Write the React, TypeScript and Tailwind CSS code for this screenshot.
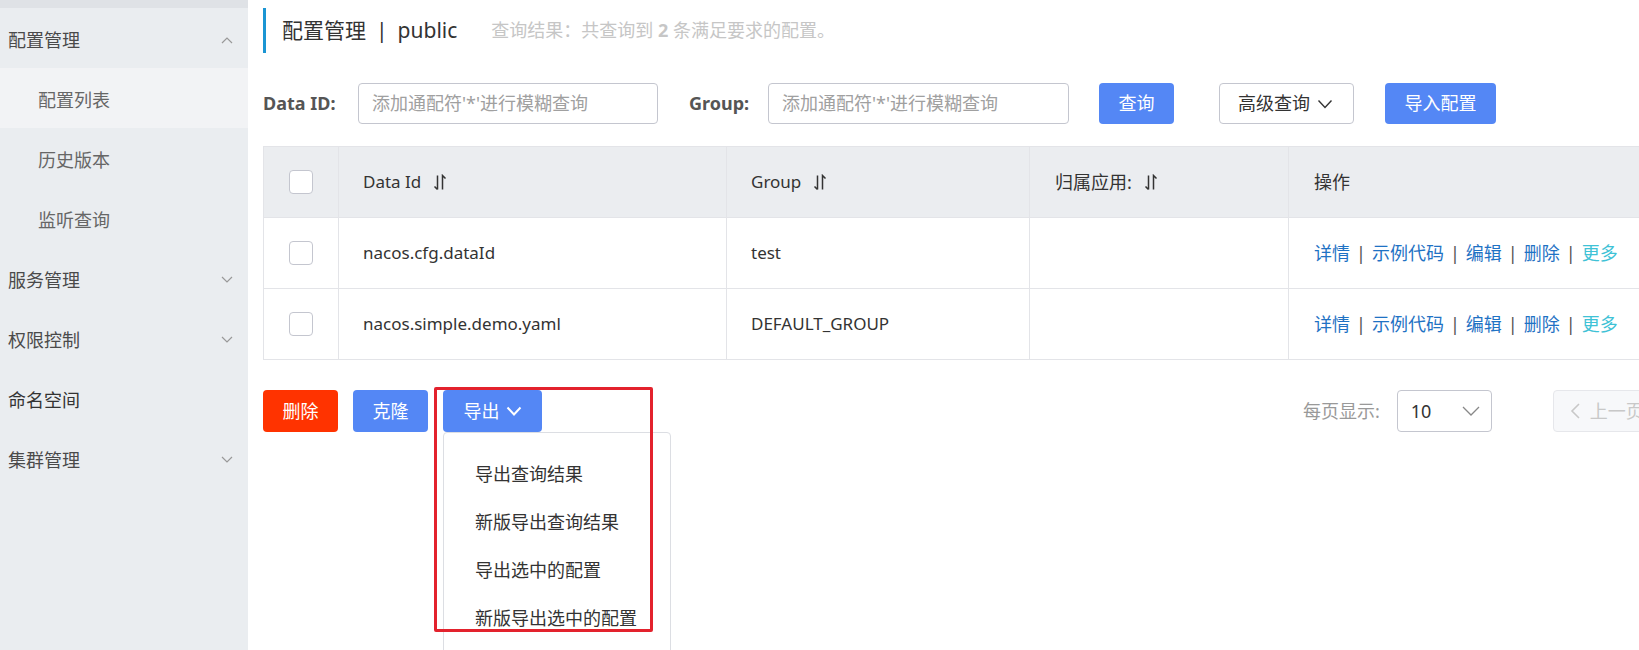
import React from "react";

const font = "font-['Noto_Sans','Noto_Sans_CJK_SC',sans-serif]";

function Chevron({ up = false, className = "" }: { up?: boolean; className?: string }) {
  return (
    <svg width="12" height="8" viewBox="0 0 12 8" fill="none" stroke="currentColor" strokeWidth="1.2" className={className}>
      <path d={up ? "M1 7l5-5 5 5" : "M1 1l5 5 5-5"} />
    </svg>
  );
}

function SortIcon() {
  return (
    <svg width="14" height="17" viewBox="0 0 14 17" fill="none" stroke="#333" strokeWidth="1.5" className="ml-[12px] shrink-0">
      <path d="M4.5 1.5v14M1.5 12.5l3 3" />
      <path d="M9.5 15.5v-14l3 3" />
    </svg>
  );
}

function Checkbox() {
  return <div className="h-[24px] w-[24px] rounded-[4px] border border-[#c4c6cf] bg-white" />;
}

const menu = [
  { label: "配置管理", open: true },
  { label: "配置列表", sub: true, active: true },
  { label: "历史版本", sub: true },
  { label: "监听查询", sub: true },
  { label: "服务管理", open: false },
  { label: "权限控制", open: false },
  { label: "命名空间" },
  { label: "集群管理", open: false },
];

const rows = [
  { id: "nacos.cfg.dataId", group: "test" },
  { id: "nacos.simple.demo.yaml", group: "DEFAULT_GROUP" },
];

const exportItems = ["导出查询结果", "新版导出查询结果", "导出选中的配置", "新版导出选中的配置"];

export default function App() {
  return (
    <div className={`${font} flex h-[650px] w-[1639px] overflow-hidden bg-white`}>
      {/* Sidebar */}
      <aside className="w-[248px] shrink-0 bg-[#eaedf0]">
        <div className="h-[8px] bg-[#dfe2e6]" />
        {menu.map((m) => (
          <div
            key={m.label}
            className={`flex h-[60px] items-center pt-[4px] text-[18px] ${
              m.active ? "bg-[#f2f3f5]" : ""
            } ${m.sub ? "pl-[38px] text-[#666]" : "pl-[8px] text-[#4a4a4a]"} ${
              m.label === "命名空间" ? "text-[#333]" : ""
            }`}
          >
            <span className="flex-1">{m.label}</span>
            {m.open !== undefined && <Chevron up={m.open} className="mr-[15px] text-[#999]" />}
          </div>
        ))}
      </aside>

      {/* Main */}
      <main className="min-w-0 flex-1 overflow-hidden pl-[15px]">
        {/* Title */}
        <div className="mt-[8px] flex h-[45px] items-center border-l-[3px] border-[#1b95d3] pl-[16px]">
          <span className="text-[21px] text-[#333]">配置管理</span>
          <span className="mx-[10px] text-[21px] text-[#333]">|</span>
          <span className="text-[21px] text-[#333]">public</span>
          <span className="ml-[34px] text-[18px] text-[#c6c6c6]">
            查询结果：共查询到 <b className="font-bold">2</b> 条满足要求的配置。
          </span>
        </div>

        {/* Search */}
        <div className="mt-[30px] flex h-[41px] items-center text-[18px]">
          <span className="w-[76px] shrink-0 font-bold text-[#555]">Data ID:</span>
          <div className="ml-[19px] flex h-[41px] w-[300px] shrink-0 items-center rounded-[4px] border border-[#c4c6cf] pl-[13px] text-[#a0a0a0]">
            添加通配符'*'进行模糊查询
          </div>
          <span className="ml-[31px] w-[62px] shrink-0 font-bold text-[#555]">Group:</span>
          <div className="ml-[17px] flex h-[41px] w-[301px] shrink-0 items-center rounded-[4px] border border-[#c4c6cf] pl-[13px] text-[#a0a0a0]">
            添加通配符'*'进行模糊查询
          </div>
          <button className="ml-[30px] h-[41px] w-[75px] shrink-0 rounded-[4px] bg-[#5487f5] text-white">查询</button>
          <button className="ml-[45px] flex h-[41px] w-[135px] shrink-0 items-center rounded-[4px] border border-[#c4c6cf] pl-[18px] text-[#333]">
            高级查询
            <svg width="16" height="10" viewBox="0 0 16 10" fill="none" stroke="#333" strokeWidth="1.4" className="ml-[7px]">
              <path d="M1.5 1.5l6.5 7 6.5-7" />
            </svg>
          </button>
          <button className="ml-[31px] h-[41px] w-[111px] shrink-0 rounded-[4px] bg-[#5487f5] text-white">导入配置</button>
        </div>

        {/* Table */}
        <div className="mt-[22px] w-[1420px] border-l border-t border-[#e3e4e8] text-[17px] text-[#333]">
          <div className="grid h-[71px] grid-cols-[75px_388px_303px_259px_1fr] bg-[#ebedf0]">
            <div className="flex items-center justify-center border-b border-r border-[#e3e4e8]">
              <Checkbox />
            </div>
            <div className="flex items-center border-b border-r border-[#e3e4e8] pl-[24px]">
              Data Id <SortIcon />
            </div>
            <div className="flex items-center border-b border-r border-[#e3e4e8] pl-[24px]">
              Group <SortIcon />
            </div>
            <div className="flex items-center border-b border-r border-[#e3e4e8] pl-[25px] text-[18px]">
              归属应用:
              <SortIcon />
            </div>
            <div className="flex items-center border-b border-r border-[#e3e4e8] pl-[25px] text-[18px]">操作</div>
          </div>
          {rows.map((r) => (
            <div key={r.id} className="grid h-[71px] grid-cols-[75px_388px_303px_259px_1fr]">
              <div className="flex items-center justify-center border-b border-r border-[#e3e4e8]">
                <Checkbox />
              </div>
              <div className="flex items-center border-b border-r border-[#e3e4e8] pl-[24px]">{r.id}</div>
              <div className="flex items-center border-b border-r border-[#e3e4e8] pl-[24px]">{r.group}</div>
              <div className="border-b border-r border-[#e3e4e8]" />
              <div className="flex items-center border-b border-r border-[#e3e4e8] pl-[25px] text-[18px] text-[#1f72c4]">
                <span>详情</span>
                <span className="mx-[6px] text-[#555]">|</span>
                <span>示例代码</span>
                <span className="mx-[6px] text-[#555]">|</span>
                <span>编辑</span>
                <span className="mx-[6px] text-[#555]">|</span>
                <span>删除</span>
                <span className="mx-[6px] text-[#555]">|</span>
                <span className="text-[#3fc2d6]">更多</span>
              </div>
            </div>
          ))}
        </div>

        {/* Toolbar */}
        <div className="mt-[30px] flex h-[42px] items-center text-[18px]">
          <button className="h-[42px] w-[75px] shrink-0 rounded-[4px] bg-[#ff3300] text-white">删除</button>
          <button className="ml-[15px] h-[42px] w-[75px] shrink-0 rounded-[4px] bg-[#5487f5] text-white">克隆</button>
          <div className="relative ml-[15px] shrink-0">
            <button className="flex h-[42px] w-[99px] items-center justify-center rounded-[4px] bg-[#5487f5] text-white">
              导出
              <svg width="16" height="10" viewBox="0 0 16 10" fill="none" stroke="white" strokeWidth="2" className="ml-[6px]">
                <path d="M1.5 1.5l6.5 7 6.5-7" />
              </svg>
            </button>
            <div className="absolute left-0 top-[42px] z-10 h-[240px] w-[228px] rounded-[4px] border border-[#dcdee3] bg-white pt-[17px] text-[#333]">
              {exportItems.map((t) => (
                <div key={t} className="flex h-[48px] items-center pl-[31px]">
                  {t}
                </div>
              ))}
            </div>
            <div className="absolute -left-[9px] -top-[3px] z-20 h-[245px] w-[219px] rounded-[2px] border-[3px] border-[#e3222d]" />
          </div>

          <span className="ml-[761px] shrink-0 text-[#999]">每页显示:</span>
          <div className="ml-[17px] flex h-[42px] w-[95px] shrink-0 items-center justify-between rounded-[4px] border border-[#c4c6cf] pl-[13px] pr-[11px] text-[#333]">
            10
            <svg width="18" height="10" viewBox="0 0 18 10" fill="none" stroke="#888" strokeWidth="1.3">
              <path d="M1 1l8 8 8-8" />
            </svg>
          </div>
          <div className="ml-[61px] flex h-[42px] w-[120px] shrink-0 items-center rounded-[4px] border border-[#e6e7eb] bg-[#f7f8fa] pl-[16px] text-[#c8c8c8]">
            <svg width="10" height="16" viewBox="0 0 10 16" fill="none" stroke="#c8c8c8" strokeWidth="1.6" className="mr-[10px]">
              <path d="M9 1L2 8l7 7" />
            </svg>
            上一页
          </div>
        </div>
      </main>
    </div>
  );
}
